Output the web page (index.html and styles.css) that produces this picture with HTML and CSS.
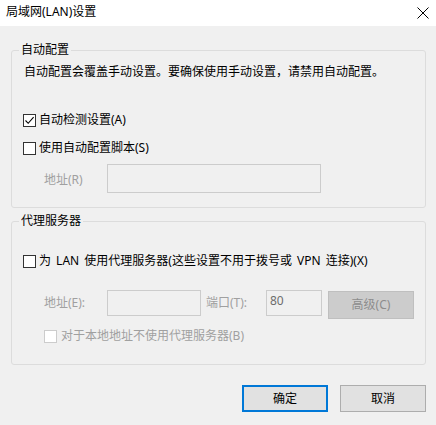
FILE: index.html
```html
<!DOCTYPE html>
<html lang="zh-CN">
<head>
<meta charset="utf-8">
<title>局域网(LAN)设置</title>
<link rel="stylesheet" href="styles.css">
</head>
<body>
<div class="window">
  <div class="titlebar">
    <span class="title">局域网(LAN)设置</span>
    <svg class="close" width="12" height="12" viewBox="0 0 12 12"><path d="M0.5 0.5 L11.5 11.5 M11.5 0.5 L0.5 11.5" stroke="#000" stroke-width="1" fill="none"/></svg>
  </div>
  <div class="main">
    <fieldset class="group group-auto">
      <legend>自动配置</legend>
      <div class="desc">自动配置会覆盖手动设置。要确保使用手动设置，请禁用自动配置。</div>
      <div class="check-row row-first">
        <span class="cb"><svg width="11" height="11" viewBox="0 0 11 11"><path d="M1.5 5.5 L4.2 8.3 L9.6 2.2" stroke="#000" stroke-width="1.1" fill="none"/></svg></span>
        <span>自动检测设置(A)</span>
      </div>
      <div class="check-row row-next">
        <span class="cb"></span>
        <span>使用自动配置脚本(S)</span>
      </div>
      <div class="addr-row">
        <span class="lbl dis">地址(R)</span>
        <span class="field field-script"></span>
      </div>
    </fieldset>
    <fieldset class="group group-proxy">
      <legend>代理服务器</legend>
      <div class="check-row row-proxy">
        <span class="cb"></span>
        <span class="proxy-text">为 LAN 使用代理服务器(这些设置不用于拨号或 VPN 连接)(X)</span>
      </div>
      <div class="proxy-row">
        <span class="lbl dis">地址(E):</span>
        <span class="field field-addr"></span>
        <span class="lbl dis port-lbl">端口(T):</span>
        <span class="field field-port">80</span>
        <span class="btn-adv">高级(C)</span>
      </div>
      <div class="check-row row-bypass dis">
        <span class="cb cb-dis"></span>
        <span>对于本地地址不使用代理服务器(B)</span>
      </div>
    </fieldset>
    <div class="footer">
      <span class="btn btn-default">确定</span>
      <span class="btn">取消</span>
    </div>
  </div>
</div>
</body>
</html>
```

FILE: styles.css
```css
html, body {
  margin: 0;
  padding: 0;
}
body {
  background: #f0f0f0;
  font-family: "Noto Sans", "Noto Sans CJK SC", sans-serif;
  font-size: 12px;
  line-height: 16px;
  color: #000;
  width: 436px;
  height: 425px;
  overflow: hidden;
}
.titlebar {
  height: 26px;
  background: #fff;
  display: flex;
  align-items: center;
  justify-content: space-between;
  padding: 0 7px 2px 6px;
  box-sizing: border-box;
}
.close {
  display: block;
  margin-top: 1px;
}
.main {
  padding: 16px 10px 0 11px;
}
.group {
  margin: 0;
  padding: 0;
  border: 1px solid #dcdcdc;
  border-radius: 3px;
  min-width: 0;
}
.group legend {
  margin-left: 7px;
  padding: 0 2px;
  line-height: 16px;
}
.group-auto {
  padding-bottom: 14px;
}
.group-proxy {
  margin-top: 5px;
  padding-bottom: 20px;
}
.desc {
  margin: 6px 0 0 12px;
}
.check-row {
  display: flex;
  align-items: center;
  gap: 3px;
  height: 16px;
  margin-left: 11px;
}
.row-first { margin-top: 32px; }
.row-next { margin-top: 12px; }
.row-proxy { margin-top: 24px; }
.proxy-text {
  word-spacing: 2px;
}
.cb {
  width: 13px;
  height: 13px;
  box-sizing: border-box;
  border: 1px solid #333;
  background: #fff;
  display: flex;
  align-items: center;
  justify-content: center;
}
.cb-dis {
  border-color: #cccccc;
}
.dis {
  color: #a0a0a0;
}
.addr-row {
  display: flex;
  align-items: center;
  margin: 8px 0 0 32px;
}
.lbl {
  width: 63px;
  flex: none;
  padding-top: 3px;
}
.field {
  box-sizing: border-box;
  border: 1px solid #cccccc;
  background: #f0f0f0;
  color: #6d6d6d;
  flex: none;
}
.field-script {
  width: 214px;
  height: 29px;
}
.proxy-row {
  display: flex;
  align-items: flex-start;
  margin: 21px 0 0 32px;
}
.proxy-row .lbl {
  line-height: 26px;
  padding-top: 0;
}
.field-addr {
  width: 94px;
  height: 26px;
}
.port-lbl.lbl {
  width: 60px;
  margin-left: 5px;
}
.field-port {
  width: 56px;
  height: 26px;
  padding-left: 3px;
  line-height: 20px;
}
.btn-adv {
  margin: 1px 0 0 6px;
  width: 86px;
  height: 28px;
  box-sizing: border-box;
  background: #cccccc;
  border: 1px solid #bfbfbf;
  color: #8c8c8c;
  display: flex;
  align-items: center;
  justify-content: center;
}
.row-bypass {
  margin: 9px 0 0 32px;
  gap: 4px;
}
.footer {
  display: flex;
  justify-content: flex-end;
  gap: 12px;
  margin-top: 20px;
}
.btn {
  width: 86px;
  height: 27px;
  box-sizing: border-box;
  background: #e1e1e1;
  border: 1px solid #adadad;
  display: flex;
  align-items: center;
  justify-content: center;
}
.btn-default {
  border: 2px solid #0078d7;
}
```
